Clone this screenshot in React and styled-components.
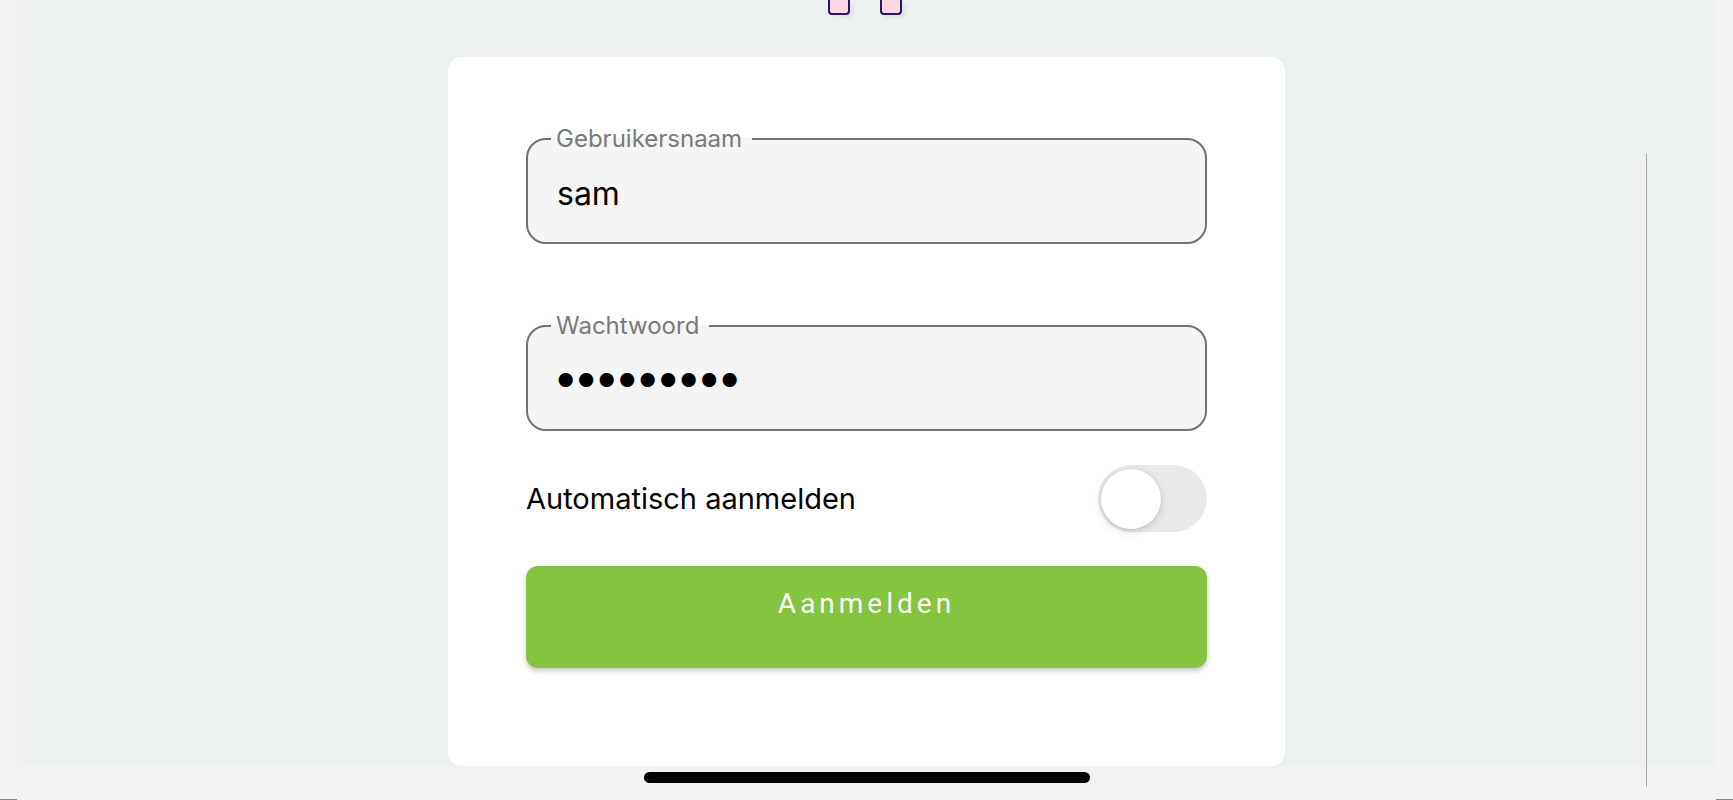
import styled, { createGlobalStyle } from "styled-components";

const GlobalStyle = createGlobalStyle`
  body {
    margin: 0;
    background: #f2f2f2;
    font-family: Inter, "Noto Sans", sans-serif;
  }
  * {
    box-sizing: border-box;
  }
`;

export default function App() {
  return (
    <>
      <GlobalStyle />
      <Page>
        <Gutter />
        <Main>
          <Screen>
            <TopIcons>
              <Tab />
              <Tab />
            </TopIcons>
            <Card>
              <Form onSubmit={(event) => event.preventDefault()}>
                <Field>
                  <Legend>Gebruikersnaam</Legend>
                  <TextInput name="username" type="text" defaultValue="sam" />
                </Field>
                <Field $spaced>
                  <Legend>Wachtwoord</Legend>
                  <PasswordInput
                    name="password"
                    type="password"
                    defaultValue="geheim123"
                  />
                </Field>
                <ToggleRow>
                  <ToggleLabel>Automatisch aanmelden</ToggleLabel>
                  <Switch type="button" aria-pressed="false">
                    <Knob />
                  </Switch>
                </ToggleRow>
                <SubmitButton type="submit">Aanmelden</SubmitButton>
              </Form>
            </Card>
          </Screen>
          <HomeStrip>
            <HomeBar />
          </HomeStrip>
        </Main>
        <Gutter />
        <ScrollLine />
      </Page>
    </>
  );
}

const Page = styled.div`
  position: relative;
  display: flex;
  width: 1733px;
  height: 800px;
  overflow: hidden;
`;

const Gutter = styled.div`
  width: 17px;
  height: 800px;
  border-bottom: 1px solid #8a8a8a;
`;

const Main = styled.div`
  flex: 1;
  display: flex;
  flex-direction: column;
`;

const Screen = styled.div`
  height: 766px;
  background: #ecf0f1;
  display: flex;
  flex-direction: column;
  align-items: center;
`;

const TopIcons = styled.div`
  display: flex;
  gap: 30px;
  height: 15px;
  margin-right: 4px;
`;

const Tab = styled.div`
  width: 22px;
  height: 15px;
  background: #ffd6e4;
  border: 2px solid #28195e;
  border-top: none;
  border-radius: 0 0 4px 4px;
  box-shadow: 4px 3px 4px rgba(0, 0, 0, 0.05);
`;

const Card = styled.div`
  margin-top: 42px;
  flex: 1;
  width: 837px;
  background: #ffffff;
  border-radius: 14px;
  padding: 68px 78px 0;
`;

const Form = styled.form`
  display: flex;
  flex-direction: column;
`;

const Field = styled.fieldset`
  margin: ${(props) => (props.$spaced ? "68px" : "0")} 0 0;
  padding: 0 23px;
  min-width: 0;
  border: 2px solid #727272;
  border-radius: 20px;
  background: #f5f5f5;
`;

const Legend = styled.legend`
  padding: 0 10px 0 5px;
  font-size: 24px;
  line-height: 28px;
  color: #7a7a7a;
`;

const TextInput = styled.input`
  display: block;
  width: 100%;
  height: 89px;
  padding: 0 0 8px 6px;
  border: none;
  outline: none;
  background: transparent;
  font-family: Inter, "Noto Sans", sans-serif;
  font-size: 32px;
  color: #000000;
`;

const PasswordInput = styled(TextInput)`
  padding: 0 0 16px 2px;
  font-size: 45px;
  letter-spacing: -4.8px;
`;

const ToggleRow = styled.div`
  margin-top: 34px;
  height: 67px;
  display: flex;
  align-items: center;
  justify-content: space-between;
`;

const ToggleLabel = styled.span`
  font-size: 29px;
  color: #000000;
`;

const Switch = styled.button`
  width: 109px;
  height: 67px;
  padding: 3px;
  border: none;
  border-radius: 34px;
  background: #e9e9ea;
  display: flex;
  align-items: center;
  cursor: pointer;
`;

const Knob = styled.span`
  width: 60px;
  height: 60px;
  border-radius: 50%;
  background: #ffffff;
  box-shadow: 0 3px 8px rgba(0, 0, 0, 0.15), 0 0 0 1px rgba(0, 0, 0, 0.04);
`;

const SubmitButton = styled.button`
  margin-top: 34px;
  height: 102px;
  padding: 21px 0 0;
  border: none;
  border-radius: 12px;
  background: #85c440;
  color: #ffffff;
  font-family: Roboto, "Liberation Sans", sans-serif;
  font-weight: 400;
  font-size: 28px;
  letter-spacing: 4px;
  display: flex;
  justify-content: center;
  align-items: flex-start;
  box-shadow: 0 3px 5px rgba(0, 0, 0, 0.22);
  cursor: pointer;
`;

const HomeStrip = styled.div`
  height: 34px;
  padding-top: 6px;
  display: flex;
  justify-content: center;
`;

const HomeBar = styled.div`
  width: 446px;
  height: 11px;
  border-radius: 6px;
  background: #000000;
`;

const ScrollLine = styled.div`
  position: absolute;
  left: 1646px;
  top: 154px;
  width: 1px;
  height: 633px;
  background: #a9a9a9;
`;
